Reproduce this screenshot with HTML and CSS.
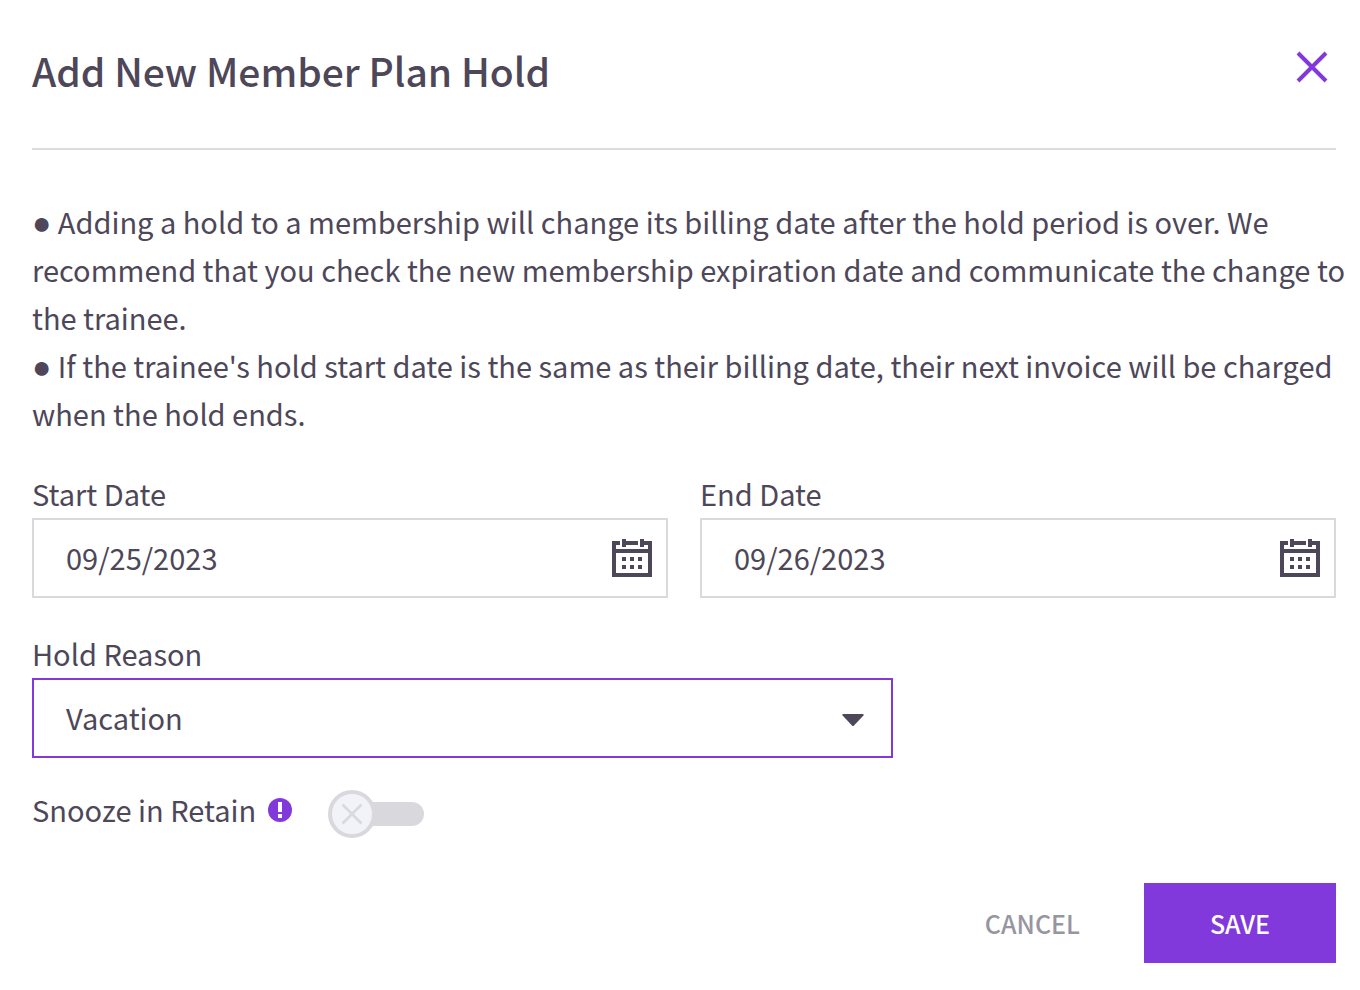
FILE: index.html
```html
<!DOCTYPE html>
<html lang="en">
<head>
<meta charset="utf-8">
<meta name="viewport" content="width=device-width, initial-scale=1">
<title>Add New Member Plan Hold</title>
<link rel="stylesheet" href="styles.css">
</head>
<body>
<main class="dialog" role="dialog" aria-labelledby="dialog-title">
  <header class="dialog-header">
    <h1 class="dialog-title" id="dialog-title">Add New Member Plan Hold</h1>
    <button class="close" type="button" aria-label="Close">
      <svg width="32" height="32" viewBox="0 0 32 32" fill="none" stroke="currentColor" stroke-width="4"><path d="M2 2 30 30M30 2 2 30"/></svg>
    </button>
  </header>
  <form class="form">
    <div class="notes">
      <p><span class="bullet">●</span> Adding a hold to a membership will change its billing date after the hold period is over. We recommend that you check the new membership expiration date and communicate the change to the trainee.</p>
      <p><span class="bullet">●</span> If the trainee's hold start date is the same as their billing date, their next invoice will be charged when the hold ends.</p>
    </div>
    <div class="dates">
      <div class="field">
        <label class="field-label" for="start-date">Start Date</label>
        <div class="box">
          <input class="control" id="start-date" type="text" value="09/25/2023">
          <button class="calendar" type="button" aria-label="Choose start date">
            <svg width="40" height="38" viewBox="0 0 40 38" fill="currentColor" shape-rendering="crispEdges"><path fill-rule="evenodd" d="M0 2H8V6H4V10H36V6H32V2H40V38H0ZM4 14V34H36V14Z"/><path d="M10 0H14V2H26V6H14V8H10ZM28 0H32V8H28ZM10 18h4v4h-4zM18 18h4v4h-4zM26 18h4v4h-4zM10 26h4v4h-4zM18 26h4v4h-4zM26 26h4v4h-4z"/></svg>
          </button>
        </div>
      </div>
      <div class="field">
        <label class="field-label" for="end-date">End Date</label>
        <div class="box">
          <input class="control" id="end-date" type="text" value="09/26/2023">
          <button class="calendar" type="button" aria-label="Choose end date">
            <svg width="40" height="38" viewBox="0 0 40 38" fill="currentColor" shape-rendering="crispEdges"><path fill-rule="evenodd" d="M0 2H8V6H4V10H36V6H32V2H40V38H0ZM4 14V34H36V14Z"/><path d="M10 0H14V2H26V6H14V8H10ZM28 0H32V8H28ZM10 18h4v4h-4zM18 18h4v4h-4zM26 18h4v4h-4zM10 26h4v4h-4zM18 26h4v4h-4zM26 26h4v4h-4z"/></svg>
          </button>
        </div>
      </div>
    </div>
    <div class="field reason">
      <label class="field-label" for="hold-reason">Hold Reason</label>
      <div class="box active">
        <select class="control" id="hold-reason"><option>Vacation</option></select>
        <svg class="arrow" width="22" height="12" viewBox="0 0 22 12" fill="currentColor"><path d="M1 0H21Q22 .5 21.4 1.4L12 11.4Q11 12.4 10 11.4L.6 1.4Q0 .5 1 0Z"/></svg>
      </div>
    </div>
    <div class="snooze">
      <label class="snooze-label" for="snooze">Snooze in Retain</label>
      <button class="info" type="button" aria-label="About Snooze in Retain">
        <svg width="24" height="24" viewBox="0 0 24 24"><circle cx="12" cy="12" r="12" fill="currentColor"/><path fill="#fff" d="M10 4h4v10h-4zM10 16h4v4h-4z"/></svg>
      </button>
      <span class="toggle">
        <input id="snooze" type="checkbox" role="switch">
        <svg width="96" height="48" viewBox="0 0 96 48"><rect x="24" y="12" width="72" height="24" rx="12" fill="#d9d8dd"/><circle cx="24" cy="24" r="22" fill="#f2f3f8" stroke="#d9d8dd" stroke-width="4"/><path d="M14.5 14.5 33.5 33.5M33.5 14.5 14.5 33.5" stroke="#d9d8dd" stroke-width="2.5"/></svg>
      </span>
    </div>
    <footer class="actions">
      <button class="btn cancel" type="button">CANCEL</button>
      <button class="btn save" type="submit">SAVE</button>
    </footer>
  </form>
</main>
</body>
</html>
```
FILE: styles.css
```css
* {
  box-sizing: border-box;
}

body {
  margin: 0;
  background: #fff;
  color: #4d4759;
  font: 400 29px/48px "Noto Sans CJK SC", sans-serif;
}

h1,
p {
  margin: 0;
}

button,
input,
select {
  font: inherit;
  color: inherit;
}

button {
  padding: 0;
  border: 0;
  background: none;
  cursor: pointer;
}

svg {
  display: block;
}

.dialog {
  padding: 40px 24px 24px 32px;
}

.dialog-header {
  display: flex;
  justify-content: space-between;
  align-items: flex-start;
  padding: 0 8px 48px 0;
  border-bottom: 2px solid #dcdcde;
}

.dialog-title {
  font-size: 39px;
  font-weight: 500;
  line-height: 60px;
}

.close {
  padding: 11px 0;
  color: #8239dc;
}

.form {
  display: flex;
  flex-direction: column;
}

.notes {
  margin-right: -16px;
  padding-top: 47px;
}

.bullet {
  font: 32px/32px "Liberation Sans", sans-serif;
}

.dates {
  display: grid;
  grid-template-columns: 1fr 1fr;
  gap: 32px;
  padding-top: 33px;
}

.field {
  display: flex;
  flex-direction: column;
}

.field-label {
  padding-bottom: 2px;
  line-height: 46px;
}

.box {
  display: flex;
  align-items: center;
  height: 80px;
  padding-right: 14px;
  border: 2px solid #dad9de;
}

.box.active {
  position: relative;
  padding-right: 0;
  border-color: #8239dc;
}

.control {
  flex: 1;
  min-width: 0;
  height: 100%;
  padding: 0 32px 2px;
  border: 0;
  outline: 0;
  background: transparent;
  appearance: none;
}

.arrow {
  position: absolute;
  top: 34px;
  right: 27px;
  pointer-events: none;
}

.reason {
  width: 66%;
  padding-top: 32px;
}

.snooze {
  display: flex;
  align-items: flex-start;
  padding-top: 32px;
}

.snooze-label {
  line-height: 38px;
}

.info {
  margin: 8px 36px 0 12px;
  color: #8239dc;
}

.toggle {
  position: relative;
}

.toggle input {
  position: absolute;
  inset: 0;
  width: 100%;
  height: 100%;
  margin: 0;
  opacity: 0;
  cursor: pointer;
}

.actions {
  display: flex;
  justify-content: flex-end;
  padding-top: 45px;
}

.btn {
  height: 80px;
  font-size: 25px;
  font-weight: 500;
}

.cancel {
  padding: 0 64px;
  color: #9695a0;
}

.save {
  min-width: 192px;
  background: #8239dc;
  color: #fff;
}
```
